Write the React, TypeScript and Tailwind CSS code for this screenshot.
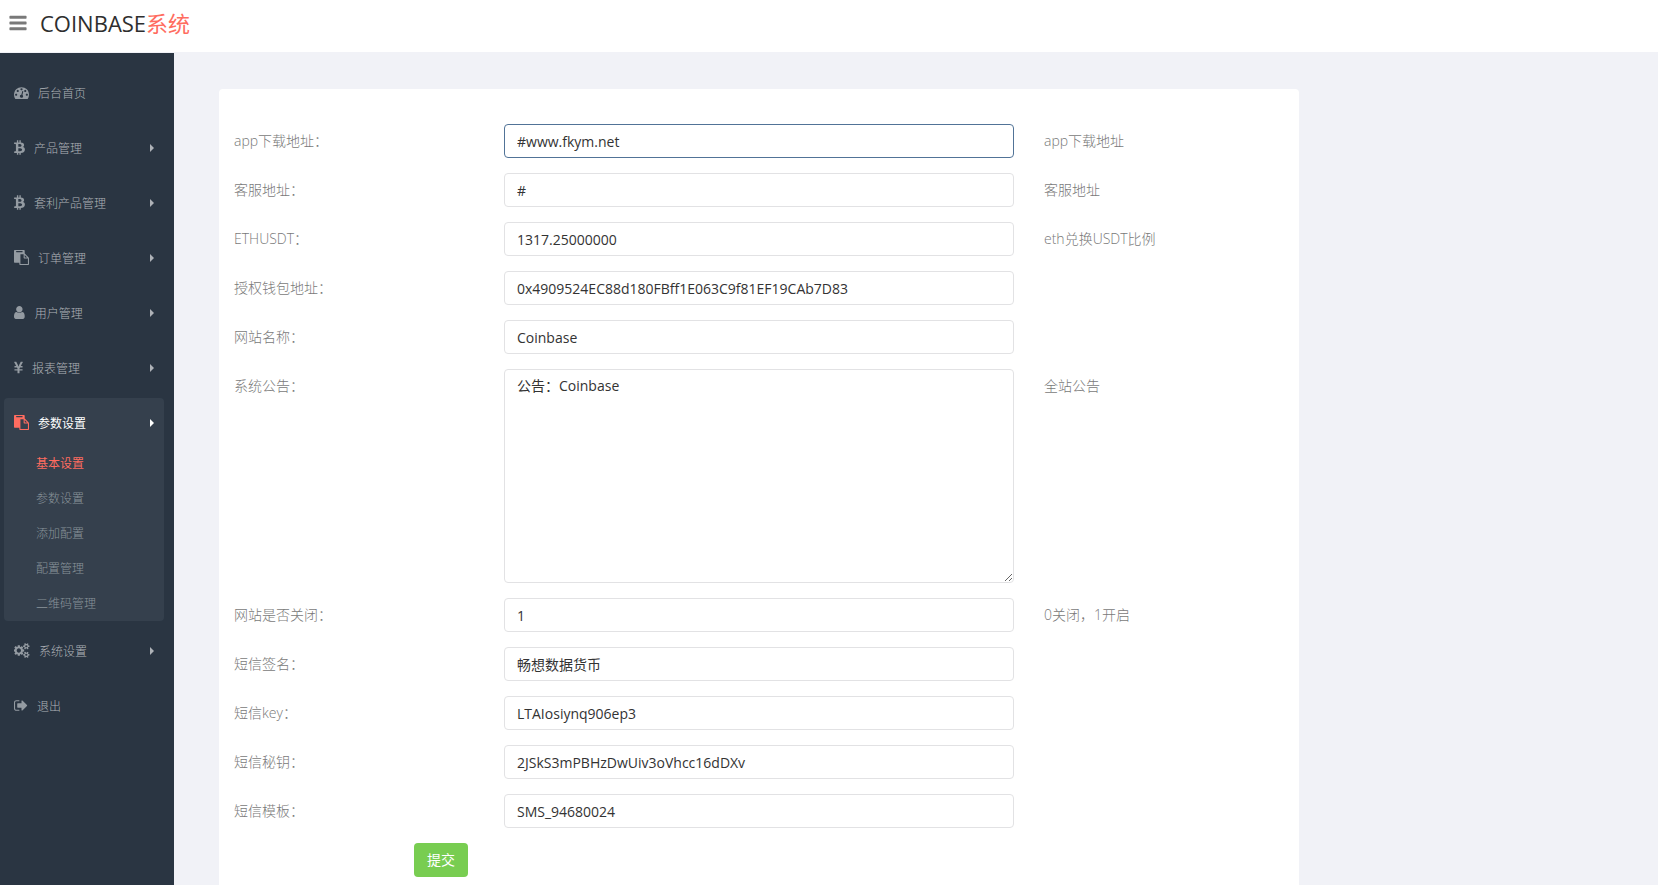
import { useState } from 'react';
import type { ReactNode } from 'react';
import { clsx } from 'clsx';
import { FaBtc, FaYenSign } from 'react-icons/fa';

// Solid glyphs drawn on a 1792 unit high grid
const Glyph = ({ width, d, className = 'h-[15px]' }: { width: number; d: string; className?: string }) => (
    <svg viewBox={`0 0 ${width} 1792`} className={clsx('shrink-0', className)} fill="currentColor" aria-hidden="true">
        <path d={d} />
    </svg>
);

const barsPath = 'M1664 1344v128q0 26-19 45t-45 19h-1408q-26 0-45-19t-19-45v-128q0-26 19-45t45-19h1408q26 0 45 19t19 45zm0-512v128q0 26-19 45t-45 19h-1408q-26 0-45-19t-19-45v-128q0-26 19-45t45-19h1408q26 0 45 19t19 45zm0-512v128q0 26-19 45t-45 19h-1408q-26 0-45-19t-19-45v-128q0-26 19-45t45-19h1408q26 0 45 19t19 45z';
const dashboardPath = 'M384 1152q0-53-37.5-90.5t-90.5-37.5-90.5 37.5-37.5 90.5 37.5 90.5 90.5 37.5 90.5-37.5 37.5-90.5zm192-448q0-53-37.5-90.5t-90.5-37.5-90.5 37.5-37.5 90.5 37.5 90.5 90.5 37.5 90.5-37.5 37.5-90.5zm428 481l101-382q6-26-7.5-48.5t-38.5-29.5-48 6.5-30 39.5l-101 382q-60 5-107 43.5t-63 98.5q-20 77 20 146t117 89 146-20 89-117q16-60-6-117t-72-91zm660-33q0-53-37.5-90.5t-90.5-37.5-90.5 37.5-37.5 90.5 37.5 90.5 90.5 37.5 90.5-37.5 37.5-90.5zm-640-640q0-53-37.5-90.5t-90.5-37.5-90.5 37.5-37.5 90.5 37.5 90.5 90.5 37.5 90.5-37.5 37.5-90.5zm448 192q0-53-37.5-90.5t-90.5-37.5-90.5 37.5-37.5 90.5 37.5 90.5 90.5 37.5 90.5-37.5 37.5-90.5zm320 448q0 261-141 483-19 29-54 29h-1402q-35 0-54-29-141-221-141-483 0-182 71-348t191-286 286-191 348-71 348 71 286 191 191 286 71 348z';
const pastePath = 'M768 1664h896v-640h-416q-40 0-68-28t-28-68v-416h-384v1152zm256-1440v-64q0-13-9.5-22.5t-22.5-9.5h-704q-13 0-22.5 9.5t-9.5 22.5v64q0 13 9.5 22.5t22.5 9.5h704q13 0 22.5-9.5t9.5-22.5zm256 672h299l-299-299v299zm512 128v672q0 40-28 68t-68 28h-960q-40 0-68-28t-28-68v-160h-544q-40 0-68-28t-28-68v-1344q0-40 28-68t68-28h1088q40 0 68 28t28 68v328q21 13 36 28l408 408q28 28 48 76t20 88z';
const userPath = 'M1280 1399q0 109-62.500 187t-150.500 78h-854q-88 0-150.500-78t-62.500-187q0-85 8.500-160.500t31.500-152 58.500-131 94-89 134.500-34.500q131 128 313 128t313-128q76 0 134.500 34.500t94 89 58.500 131 31.500 152 8.500 160.500zm-256-887q0 159-112.500 271.500t-271.500 112.500-271.500-112.500-112.500-271.500 112.500-271.500 271.500-112.500 271.500 112.500 112.500 271.500z';
const cogsPath = 'M832 896q0-106-75-181t-181-75-181 75-75 181 75 181 181 75 181-75 75-181zm768 512q0-52-38-90t-90-38-90 38-38 90q0 53 37.5 90.5t90.5 37.5 90.5-37.5 37.5-90.5zm0-1024q0-52-38-90t-90-38-90 38-38 90q0 53 37.5 90.5t90.5 37.5 90.5-37.5 37.5-90.5zm-384 421v185q0 10-7 19.5t-16 10.5l-155 24q-11 35-32 76 34 48 90 115 7 11 7 20 0 12-7 19-23 30-82.5 89.5t-78.5 59.5q-11 0-21-7l-115-90q-37 19-77 31-11 108-23 155-7 24-30 24h-186q-11 0-20-7.5t-10-17.5l-23-153q-34-10-75-31l-118 89q-7 7-20 7-11 0-21-8-144-133-144-160 0-9 7-19 10-14 41-53t47-61q-23-44-35-82l-152-24q-10-1-17-9.5t-7-19.5v-185q0-10 7-19.5t16-10.5l155-24q11-35 32-76-34-48-90-115-7-11-7-20 0-12 7-20 22-30 82-89t79-59q11 0 21 7l115 90q34-18 77-32 11-108 23-154 7-24 30-24h186q11 0 20 7.5t10 17.5l23 153q34 10 75 31l118-89q8-7 20-7 11 0 21 8 144 133 144 160 0 8-7 19-12 16-42 54t-45 60q23 48 34 82l152 23q10 2 17 10.5t7 19.5zm640 533v140q0 16-149 31-12 27-30 52 51 113 51 138 0 4-4 7-122 71-124 71-8 0-46-47t-52-68q-20 2-30 2t-30-2q-14 21-52 68t-46 47q-2 0-124-71-4-3-4-7 0-25 51-138-18-25-30-52-149-15-149-31v-140q0-16 149-31 13-29 30-52-51-113-51-138 0-4 4-7 4-2 35-20t59-34 30-16q8 0 46 46.5t52 67.5q20-2 30-2t30 2q51-71 92-112l6-2q4 0 124 70 4 3 4 7 0 25-51 138 17 23 30 52 149 15 149 31zm0-1024v140q0 16-149 31-12 27-30 52 51 113 51 138 0 4-4 7-122 71-124 71-8 0-46-47t-52-68q-20 2-30 2t-30-2q-14 21-52 68t-46 47q-2 0-124-71-4-3-4-7 0-25 51-138-18-25-30-52-149-15-149-31v-140q0-16 149-31 13-29 30-52-51-113-51-138 0-4 4-7 4-2 35-20t59-34 30-16q8 0 46 46.5t52 67.5q20-2 30-2t30 2q51-71 92-112l6-2q4 0 124 70 4 3 4 7 0 25-51 138 17 23 30 52 149 15 149 31z';
const signOutPath = 'M640 1440q0 4 1 20t.5 26.5-3 23.500-10 19.500-20.500 6.500h-320q-119 0-203.500-84.500t-84.500-203.500v-704q0-119 84.500-203.500t203.500-84.500h320q13 0 22.500 9.500t9.500 22.500q0 4 1 20t.5 26.500-3 23.500-10 19.500-20.500 6.500h-320q-66 0-113 47t-47 113v704q0 66 47 113t113 47h312l11.500 1 11.500 3 8 5.500 7 9 2 13.500zm928-544q0 26-19 45l-544 544q-19 19-45 19t-45-19-19-45v-288h-448q-26 0-45-19t-19-45v-384q0-26 19-45t45-19h448v-288q0-26 19-45t45-19 45 19l544 544q19 19 19 45z';

type MenuItem = { label: string; icon: ReactNode; children?: string[]; leaf?: boolean };

const menu: MenuItem[] = [
    { label: '后台首页', icon: <Glyph width={1792} d={dashboardPath} />, leaf: true },
    { label: '产品管理', icon: <FaBtc className="h-[15px] w-[11px]" /> },
    { label: '套利产品管理', icon: <FaBtc className="h-[15px] w-[11px]" /> },
    { label: '订单管理', icon: <Glyph width={1792} d={pastePath} /> },
    { label: '用户管理', icon: <Glyph width={1408} d={userPath} /> },
    { label: '报表管理', icon: <FaYenSign className="h-[13px] w-[9px]" preserveAspectRatio="xMidYMid slice" /> },
    {
        label: '参数设置',
        icon: <Glyph width={1792} d={pastePath} />,
        children: ['基本设置', '参数设置', '添加配置', '配置管理', '二维码管理'],
    },
    { label: '系统设置', icon: <Glyph width={1920} d={cogsPath} /> },
    { label: '退出', icon: <Glyph width={1664} d={signOutPath} />, leaf: true },
];

type Field = { id: string; label: string; value: string; help?: string; multiline?: boolean };

const fields: Field[] = [
    { id: 'app_url', label: 'app下载地址：', value: '#www.fkym.net', help: 'app下载地址' },
    { id: 'service_url', label: '客服地址：', value: '#', help: '客服地址' },
    { id: 'ethusdt', label: 'ETHUSDT：', value: '1317.25000000', help: 'eth兑换USDT比例' },
    { id: 'wallet', label: '授权钱包地址：', value: '0x4909524EC88d180FBff1E063C9f81EF19CAb7D83' },
    { id: 'site_name', label: '网站名称：', value: 'Coinbase' },
    { id: 'notice', label: '系统公告：', value: '公告：Coinbase', help: '全站公告', multiline: true },
    { id: 'is_open', label: '网站是否关闭：', value: '1', help: '0关闭，1开启' },
    { id: 'sms_sign', label: '短信签名：', value: '畅想数据货币' },
    { id: 'sms_key', label: '短信key：', value: 'LTAIosiynq906ep3' },
    { id: 'sms_secret', label: '短信秘钥：', value: '2JSkS3mPBHzDwUiv3oVhcc16dDXv' },
    { id: 'sms_tpl', label: '短信模板：', value: 'SMS_94680024' },
];

function Sidebar() {
    return (
        <nav className="w-[174px] shrink-0 bg-[#2a3542] pt-[15px] pr-[10px] pl-1 text-xs">
            <ul className="flex flex-col gap-[7px]">
                {menu.map((item) => (
                    <li key={item.label} className={clsx('rounded', item.children && '-mb-0.5 bg-[#35404d]')}>
                        <a
                            href="#"
                            className={clsx(
                                'flex h-12 items-center gap-[9px] pt-0.5 pr-[10px] pl-[10px]',
                                item.children ? 'text-white' : 'font-light text-[#aeb2b7]'
                            )}
                        >
                            <span className={clsx('shrink-0 pb-0.5', item.children ? 'text-[#ff6c60]' : 'text-[#949ba2]')}>
                                {item.icon}
                            </span>
                            <span className="flex-1 pt-0.5">{item.label}</span>
                            {!item.leaf && (
                                <svg viewBox="0 0 4 8" className="h-2 w-1" fill="currentColor" aria-hidden="true">
                                    <path d="M0 0l4 4-4 4z" />
                                </svg>
                            )}
                        </a>
                        {item.children && (
                            <ul>
                                {item.children.map((child, i) => (
                                    <li key={child}>
                                        <a
                                            href="#"
                                            className={clsx(
                                                'flex h-[35px] items-center pl-8',
                                                i === 0 ? 'text-[#ff6c60]' : 'font-light text-[#8a949b]'
                                            )}
                                        >
                                            {child}
                                        </a>
                                    </li>
                                ))}
                            </ul>
                        )}
                    </li>
                ))}
            </ul>
        </nav>
    );
}

const controlClass =
    'block w-full rounded border bg-white px-3 py-1.5 text-sm leading-5 text-[#333] outline-none focus:border-[#517397]';

function SettingsForm() {
    const [values, setValues] = useState<Record<string, string>>(
        Object.fromEntries(fields.map((f) => [f.id, f.value]))
    );

    const update = (id: string, value: string) => setValues((prev) => ({ ...prev, [id]: value }));

    return (
        <form onSubmit={(e) => e.preventDefault()} className="flex flex-col gap-[15px] text-sm leading-5 text-[#797979]">
            {fields.map((field, i) => (
                <div key={field.id} className="grid grid-cols-12">
                    <label htmlFor={field.id} className="col-span-3 px-[15px] pt-[7px] font-light">
                        {field.label}
                    </label>
                    <div className="col-span-6 px-[15px]">
                        {field.multiline ? (
                            <textarea
                                id={field.id}
                                rows={10}
                                className={clsx(controlClass, 'h-[214px] resize border-[#e2e2e4]')}
                                value={values[field.id]}
                                onChange={(e) => update(field.id, e.target.value)}
                            />
                        ) : (
                            <input
                                id={field.id}
                                type="text"
                                autoComplete="off"
                                className={clsx(controlClass, 'h-[34px]', i === 0 ? 'border-[#517397]' : 'border-[#e2e2e4]')}
                                value={values[field.id]}
                                onChange={(e) => update(field.id, e.target.value)}
                            />
                        )}
                    </div>
                    {field.help && <p className="col-span-3 px-[15px] pt-[7px] font-light">{field.help}</p>}
                </div>
            ))}
            <div className="grid grid-cols-12">
                <div className="col-span-10 col-start-3 px-[15px]">
                    <button type="submit" className="h-[34px] rounded bg-[#78cd51] px-[13px] text-white">
                        提交
                    </button>
                </div>
            </div>
        </form>
    );
}

export default function App() {
    return (
        <div className="flex min-h-screen flex-col bg-[#f1f2f7] font-['Open_Sans','Noto_Sans_CJK_SC',sans-serif]">
            {/* Header */}
            <header className="flex h-[53px] items-start border-b border-[#f1f2f7] bg-white pt-2 pl-2">
                <button type="button" aria-label="菜单" className="flex h-[30px] items-center text-[#797979]">
                    <Glyph width={1792} d={barsPath} className="h-5" />
                </button>
                <a href="#" className="ml-3 text-[22px] leading-[30px] text-[#2e2e2e]">
                    COINBASE<span className="text-[#ff6c60]">系统</span>
                </a>
            </header>

            <div className="flex flex-1">
                <Sidebar />
                <main className="flex flex-1 flex-col pt-9 pl-[45px]">
                    <section className="w-full max-w-[1080px] flex-1 rounded-t bg-white pt-[35px] pb-2">
                        <SettingsForm />
                    </section>
                </main>
            </div>
        </div>
    );
}
